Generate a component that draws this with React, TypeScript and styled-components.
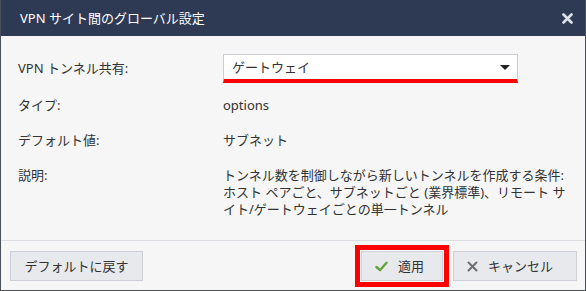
import styled, { createGlobalStyle } from "styled-components"

const GlobalStyle = createGlobalStyle`
  html, body {
    margin: 0;
    padding: 0;
    background: #f6f6f6;
  }
  * {
    box-sizing: border-box;
  }
`

const CloseIcon = () => (
  <svg width="11" height="11" viewBox="0 0 11 11">
    <path d="M1.5 1.5 L9.5 9.5 M9.5 1.5 L1.5 9.5" stroke="#dde2ea" strokeWidth="2.6" strokeLinecap="round" />
  </svg>
)

const CheckIcon = () => (
  <svg width="13" height="11" viewBox="0 0 13 11">
    <path d="M1.5 6 L5 9.2 L11.5 1.8" fill="none" stroke="#63a53c" strokeWidth="2.4" strokeLinecap="round" strokeLinejoin="round" />
  </svg>
)

const CrossIcon = () => (
  <svg width="11" height="11" viewBox="0 0 11 11">
    <path d="M1.5 1.5 L9.5 9.5 M9.5 1.5 L1.5 9.5" stroke="#6b6f75" strokeWidth="2" strokeLinecap="round" />
  </svg>
)

const App = () => {
  return (
    <>
      <GlobalStyle />
      <Dialog>
        <Header>
          <Title>VPN サイト間のグローバル設定</Title>
          <CloseButton>
            <CloseIcon />
          </CloseButton>
        </Header>

        <Content>
          <Row>
            <Label>VPN トンネル共有:</Label>
            <Select>
              <span>ゲートウェイ</span>
              <Arrow />
            </Select>
          </Row>
          <Row $gap={14}>
            <Label>タイプ:</Label>
            <Value>options</Value>
          </Row>
          <Row $gap={18}>
            <Label>デフォルト値:</Label>
            <Value>サブネット</Value>
          </Row>
          <Row $gap={18}>
            <Label>説明:</Label>
            <Value>
              トンネル数を制御しながら新しいトンネルを作成する条件:
              <br />
              ホスト ペアごと、サブネットごと (業界標準)、リモート サ
              <br />
              イト/ゲートウェイごとの単一トンネル
            </Value>
          </Row>
        </Content>

        <Footer>
          <Button $width={133} $center>デフォルトに戻す</Button>
          <ButtonGroup>
            <Button $width={82} $highlight>
              <CheckIcon />
              <span>適用</span>
            </Button>
            <Button $width={124}>
              <CrossIcon />
              <span>キャンセル</span>
            </Button>
          </ButtonGroup>
        </Footer>
      </Dialog>
    </>
  )
}

export default App

const Dialog = styled.div`
  width: 586px;
  height: 291px;
  display: flex;
  flex-direction: column;
  background: #f6f6f6;
  border: 1px solid #4a505a;
  border-top: none;
  font-family: "Noto Sans", "Noto Sans CJK JP", sans-serif;
  font-size: 13px;
  color: #333;
`

const Header = styled.div`
  height: 36px;
  flex-shrink: 0;
  background: #2e3a53;
  display: flex;
  align-items: center;
  justify-content: space-between;
  padding: 0 11px 0 19px;
`

const Title = styled.div`
  color: #fff;
  font-size: 13px;
  line-height: 17px;
`

const CloseButton = styled.div`
  display: flex;
  align-items: center;
  justify-content: center;
  width: 14px;
  height: 14px;
`

const Content = styled.div`
  flex: 1;
  padding: 18px 17px 0 17px;
  display: flex;
  flex-direction: column;
`

const Row = styled.div<{ $gap?: number }>`
  display: grid;
  grid-template-columns: 205px 295px;
  align-items: ${(p) => (p.$gap ? "start" : "center")};
  margin-top: ${(p) => p.$gap ?? 0}px;
`

const Label = styled.div`
  line-height: 17px;
  color: #333;
`

const Value = styled.div`
  line-height: 17px;
  color: #333;
  white-space: nowrap;
`

const Select = styled.div`
  height: 29px;
  background: #fff;
  border: 1px solid #c9ccd1;
  border-bottom: 4px solid #ff0000;
  display: flex;
  align-items: center;
  justify-content: space-between;
  padding: 0 7px 0 8px;
  line-height: 17px;
  color: #333;
`

const Arrow = styled.div`
  width: 0;
  height: 0;
  border-left: 5px solid transparent;
  border-right: 5px solid transparent;
  border-top: 5px solid #222;
`

const Footer = styled.div`
  height: 50px;
  flex-shrink: 0;
  border-top: 1px solid #dadde2;
  display: flex;
  align-items: flex-start;
  justify-content: space-between;
  padding: 10px 8px 0 9px;
`

const ButtonGroup = styled.div`
  display: flex;
  gap: 10px;
`

const Button = styled.div<{ $width: number; $highlight?: boolean; $center?: boolean }>`
  width: ${(p) => p.$width}px;
  height: 30px;
  background: #e8e9ec;
  border: 1px solid #cdd0d6;
  display: flex;
  align-items: center;
  justify-content: ${(p) => (p.$center ? "center" : "flex-start")};
  gap: 10px;
  padding-left: ${(p) => (p.$center ? 0 : 13)}px;
  color: #333;
  line-height: 17px;
  box-shadow: ${(p) => (p.$highlight ? "0 0 0 1px #fff, 0 0 0 6px #ff0000" : "none")};
`
